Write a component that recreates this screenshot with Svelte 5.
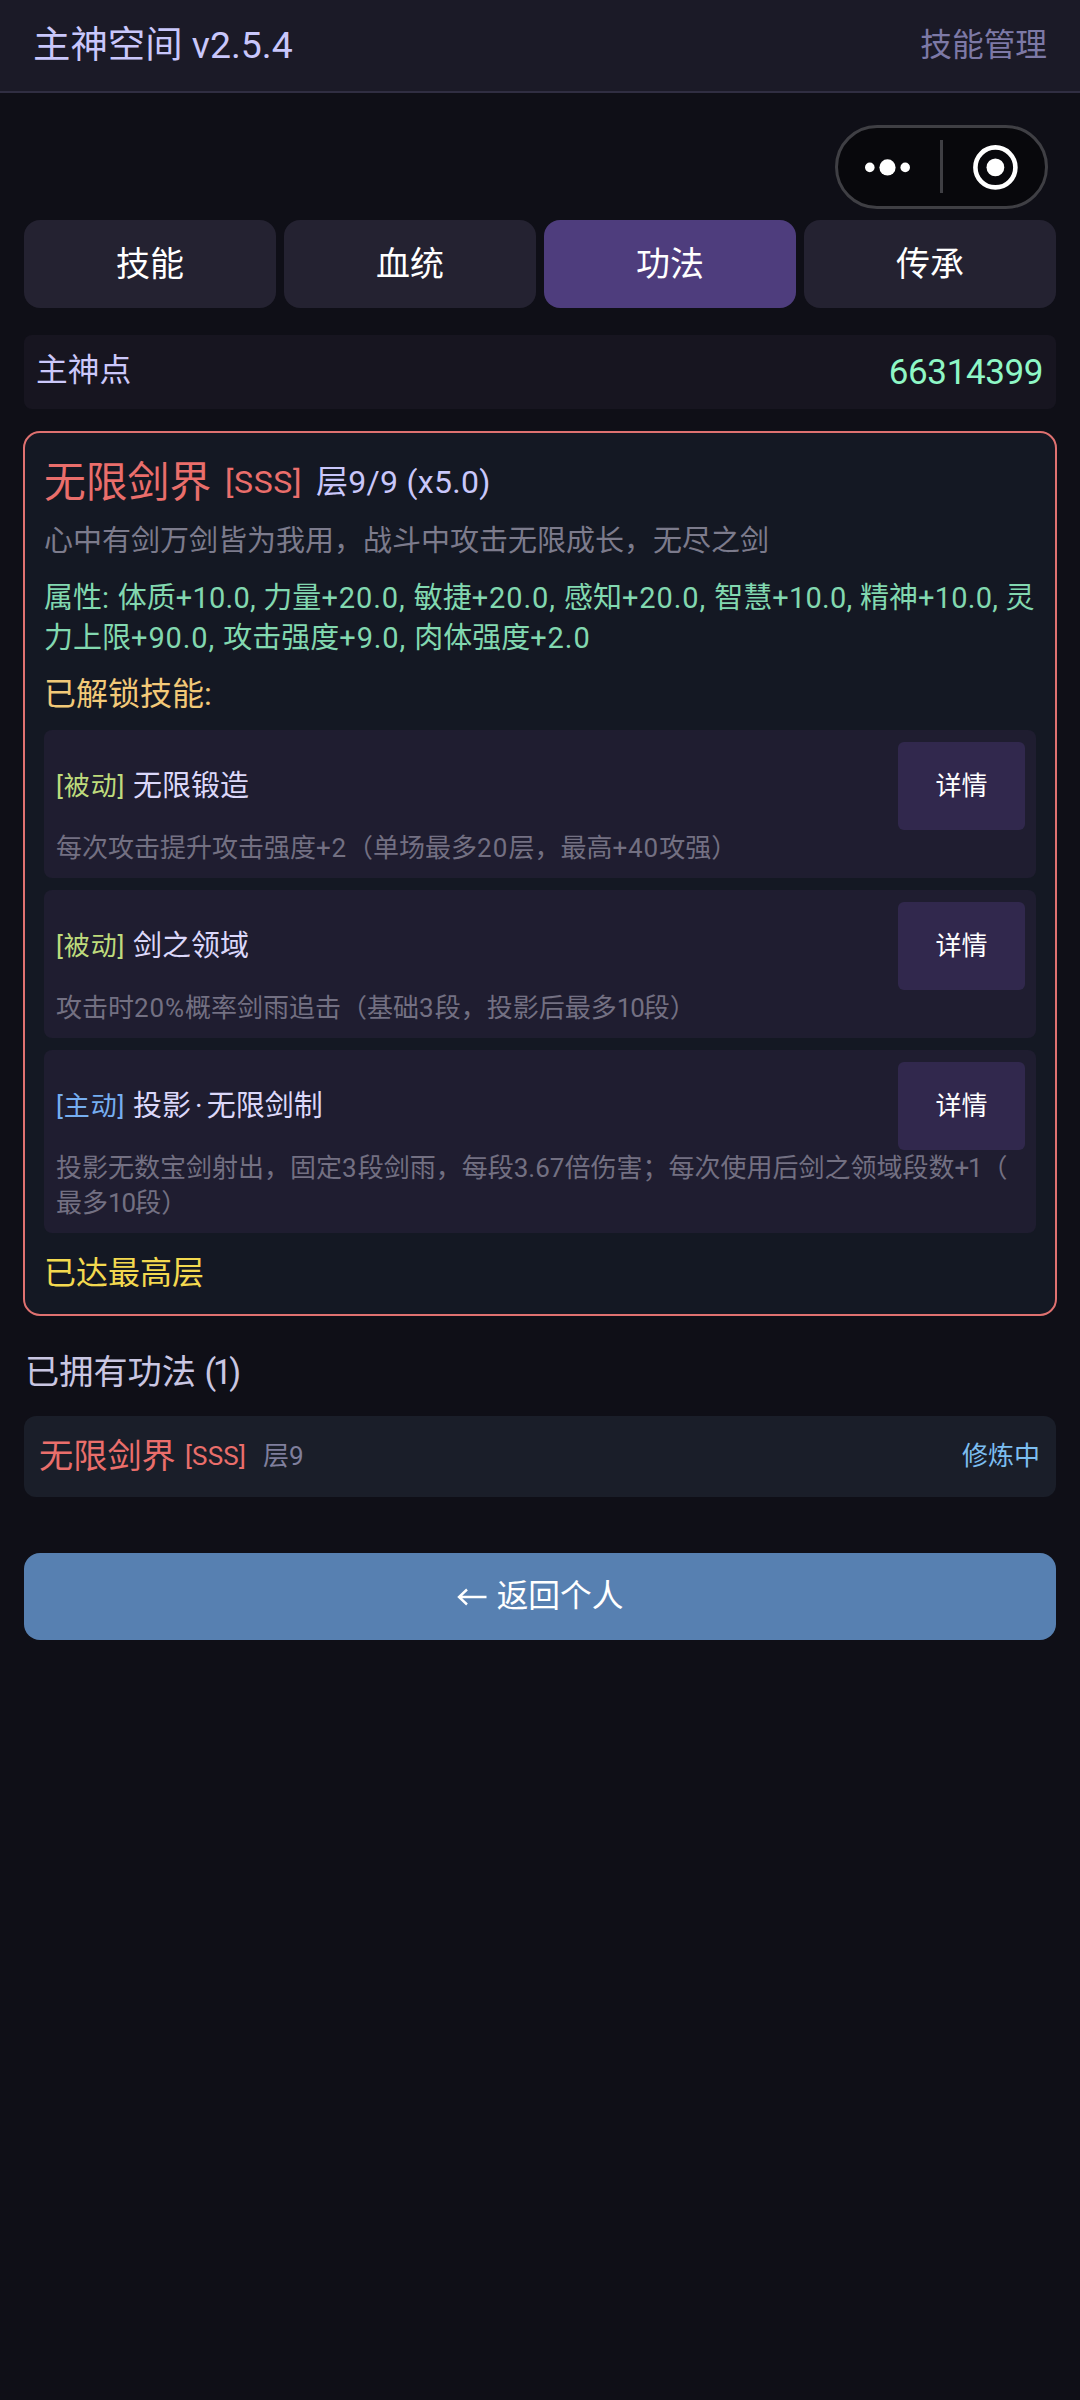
<script>
  const tabs = ['技能', '血统', '功法', '传承'];
  const activeTab = '功法';
  const attrLines = [
    '属性: 体质+10.0, 力量+20.0, 敏捷+20.0, 感知+20.0, 智慧+10.0, 精神+10.0, 灵',
    '力上限+90.0, 攻击强度+9.0, 肉体强度+2.0'
  ];
  const skills = [
    { kind: 'passive', tag: '[被动]', name: '无限锻造', lines: ['每次攻击提升攻击强度+2（单场最多20层，最高+40攻强）'] },
    { kind: 'passive', tag: '[被动]', name: '剑之领域', lines: ['攻击时20%概率剑雨追击（基础3段，投影后最多10段）'] },
    {
      kind: 'active',
      tag: '[主动]',
      name: '投影·无限剑制',
      lines: ['投影无数宝剑射出，固定3段剑雨，每段3.67倍伤害；每次使用后剑之领域段数+1（', '最多10段）']
    }
  ];

  // Splits mixed text into CJK and Latin runs; Latin runs get optical tracking in em.
  function runs(text) {
    return text
      .split(/([\x20-\x7e]+|·)/)
      .filter((part) => part !== '')
      .map((part) => {
        if (part === '·') return { text: part, dot: true };
        if (!/^[\x20-\x7e]+$/.test(part)) return { text: part };
        let sum = 0;
        for (const ch of part) {
          if (ch === '1') sum -= 0.12;
          else if (ch === '7') sum -= 0.1;
          else if (/\d/.test(ch)) sum += 0.04;
          else sum += 0.025;
        }
        return { text: part, latin: true, track: (sum / part.length).toFixed(4) };
      });
  }
</script>

{#snippet mixed(text)}
  {#each runs(text) as run}{#if run.latin}<span style="letter-spacing: {run.track}em">{run.text}</span>{:else if run.dot}<span class="dot">{run.text}</span>{:else}{run.text}{/if}{/each}
{/snippet}

<div class="page" lang="zh-CN">
  <header>
    <span class="app">主神空间 v2.5.4</span>
    <span class="where">技能管理</span>
  </header>

  <div class="capsule-row">
    <svg class="capsule" width="213" height="84" viewBox="0 0 213 84">
      <rect x="1.5" y="1.5" width="210" height="81" rx="40.5" fill="#08080c" stroke="#3f3f44" stroke-width="3" />
      <g fill="#fff">
        <circle cx="34.8" cy="42.4" r="4.8" />
        <circle cx="52.5" cy="42.4" r="8.1" />
        <circle cx="70.2" cy="42.4" r="4.8" />
        <circle cx="160.4" cy="42.4" r="8.9" />
      </g>
      <rect x="105" y="15" width="3" height="53" fill="#3f3f44" />
      <circle cx="160.4" cy="42.4" r="20" fill="none" stroke="#fff" stroke-width="4.6" />
    </svg>
  </div>

  <nav>
    {#each tabs as tab}
      <button class="tab" class:on={tab === activeTab}>{tab}</button>
    {/each}
  </nav>

  <section class="points">
    <span class="label">主神点</span>
    <span class="value">66314399</span>
  </section>

  <section class="card">
    <div class="head">
      <span class="name">无限剑界</span>
      <span class="rank">[SSS]</span>
      <span class="level">层9/9 (x5.0)</span>
    </div>
    <p class="desc">心中有剑万剑皆为我用，战斗中攻击无限成长，无尽之剑</p>
    <p class="attrs">
      {#each attrLines as line}
        <span class="line">{@render mixed(line)}</span>
      {/each}
    </p>
    <h3>已解锁技能:</h3>
    <div class="skills">
      {#each skills as skill}
        <article>
          <div class="top">
            <span class="tag {skill.kind}">{skill.tag}</span>
            <span class="title">{@render mixed(skill.name)}</span>
            <button class="detail">详情</button>
          </div>
          <p>
            {#each skill.lines as line}
              <span class="line">{@render mixed(line)}</span>
            {/each}
          </p>
        </article>
      {/each}
    </div>
    <div class="max">已达最高层</div>
  </section>

  <h2>已拥有功法 <span class="count">(1)</span></h2>
  <section class="owned">
    <span class="o-name">无限剑界</span>
    <span class="o-rank">[SSS]</span>
    <span class="o-level">层9</span>
    <span class="status">修炼中</span>
  </section>

  <button class="back">
    <svg width="30" height="18" viewBox="0 0 30 18" fill="none" stroke="#fff" stroke-width="2.4">
      <path d="M29.5 9H2M10 1.5L2 9l8 7.5" />
    </svg>
    <span>返回个人</span>
  </button>
</div>

<style>
  :global(body) {
    background: #0f0f17;
  }
  .page {
    box-sizing: border-box;
    width: 1080px;
    height: 2400px;
    background: #0f0f17;
    font-family: Roboto, 'Noto Sans CJK SC', sans-serif;
    font-weight: 400;
    color: #fff;
    white-space: nowrap;
  }
  p,
  h2,
  h3 {
    margin: 0;
    font-weight: 400;
  }
  button {
    border: 0;
    padding: 0;
    margin: 0;
    font-family: inherit;
    color: #fff;
  }
  .line {
    display: block;
  }
  .dot {
    padding: 0 0.14em;
  }
  header {
    box-sizing: border-box;
    height: 93px;
    padding: 0 33px 0 33px;
    background: #1b1a27;
    border-bottom: 2px solid #302e42;
    display: flex;
    justify-content: space-between;
    align-items: center;
    line-height: 61px;
  }
  .app {
    font-size: 37.4px;
    color: #c9c7fb;
  }
  .where {
    font-size: 31.7px;
    color: #7d79a6;
  }
  .capsule-row {
    display: flex;
    justify-content: flex-end;
    padding: 32px 32px 11px 0;
  }
  .capsule {
    display: block;
  }
  nav {
    display: grid;
    grid-template-columns: repeat(4, 1fr);
    gap: 8px;
    padding: 0 24px;
  }
  .tab {
    height: 88px;
    border-radius: 16px;
    background: #242231;
    font-size: 34px;
    line-height: 88px;
  }
  .tab.on {
    background: #4e3d7d;
  }
  .points {
    box-sizing: border-box;
    margin: 27px 24px 0;
    height: 74px;
    padding: 0 13px 0 12px;
    border-radius: 8px;
    background: #171520;
    display: flex;
    justify-content: space-between;
    line-height: 76px;
  }
  .label {
    font-size: 31.7px;
    line-height: 72px;
    color: #ccc8fa;
  }
  .value {
    font-size: 35px;
    letter-spacing: -0.4px;
    color: #8ff7c6;
  }
  .card {
    box-sizing: border-box;
    margin: 22px 23px 0;
    height: 885px;
    padding: 18px 19px 0;
    border: 2px solid #df7170;
    border-radius: 17px;
    background: #141823;
  }
  .head {
    display: flex;
    align-items: center;
    height: 62px;
    line-height: 63px;
  }
  .name {
    font-size: 41.8px;
    color: #ea6e6b;
    width: 181px;
  }
  .rank {
    font-size: 32px;
    letter-spacing: 0.6px;
    color: #ea6e6b;
    width: 91px;
  }
  .level {
    font-size: 32px;
    letter-spacing: 0.3px;
    color: #c9c7fb;
  }
  .desc {
    font-size: 29px;
    line-height: 56px;
    color: #7c7b8c;
  }
  .attrs {
    margin-top: 9px;
    font-size: 29px;
    line-height: 40px;
    color: #82d8b0;
  }
  h3 {
    margin-top: 8px;
    font-size: 32px;
    line-height: 56px;
    color: #f2c978;
  }
  .skills {
    display: grid;
    gap: 12px;
    margin-top: 8px;
  }
  article {
    box-sizing: border-box;
    padding: 12px 11px 12px 12px;
    border-radius: 8px;
    background: #1f1d30;
  }
  .top {
    display: flex;
    align-items: center;
    height: 88px;
    line-height: 90px;
  }
  .tag {
    font-size: 26px;
    letter-spacing: 0.9px;
    width: 77px;
  }
  .passive {
    color: #bedb7c;
  }
  .active {
    color: #76aef0;
  }
  .title {
    font-size: 29px;
    color: #dcd8fa;
  }
  .detail {
    margin-left: auto;
    width: 127px;
    height: 88px;
    border-radius: 6px;
    background: #31284d;
    font-size: 26px;
    line-height: 88px;
  }
  article p {
    padding-top: 1px;
    font-size: 26px;
    line-height: 35px;
    color: #737082;
  }
  .max {
    margin-top: 10px;
    font-size: 32px;
    line-height: 60px;
    color: #f3d94f;
  }
  h2 {
    padding-left: 25px;
    margin-top: 26px;
    height: 74px;
    font-size: 34.2px;
    line-height: 60px;
    color: #c9c6e2;
  }
  .count {
    letter-spacing: -3px;
  }
  .owned {
    box-sizing: border-box;
    margin: 0 24px;
    height: 81px;
    padding: 0 16px 0 15px;
    border-radius: 12px;
    background: #1a1e29;
    display: flex;
    align-items: center;
    line-height: 81px;
  }
  .o-name {
    font-size: 34.2px;
    color: #ea6e6b;
    width: 146px;
  }
  .o-rank {
    font-size: 26px;
    letter-spacing: 0.2px;
    color: #ea6e6b;
    width: 78px;
  }
  .o-level {
    font-size: 26px;
    color: #7f7f9c;
  }
  .status {
    margin-left: auto;
    font-size: 26px;
    color: #7cbdf0;
  }
  .back {
    display: flex;
    align-items: center;
    justify-content: center;
    gap: 10px;
    width: 1032px;
    height: 87px;
    margin: 56px 24px 0;
    border-radius: 16px;
    background: #5780b1;
    font-size: 31.7px;
    line-height: 84px;
  }
</style>
